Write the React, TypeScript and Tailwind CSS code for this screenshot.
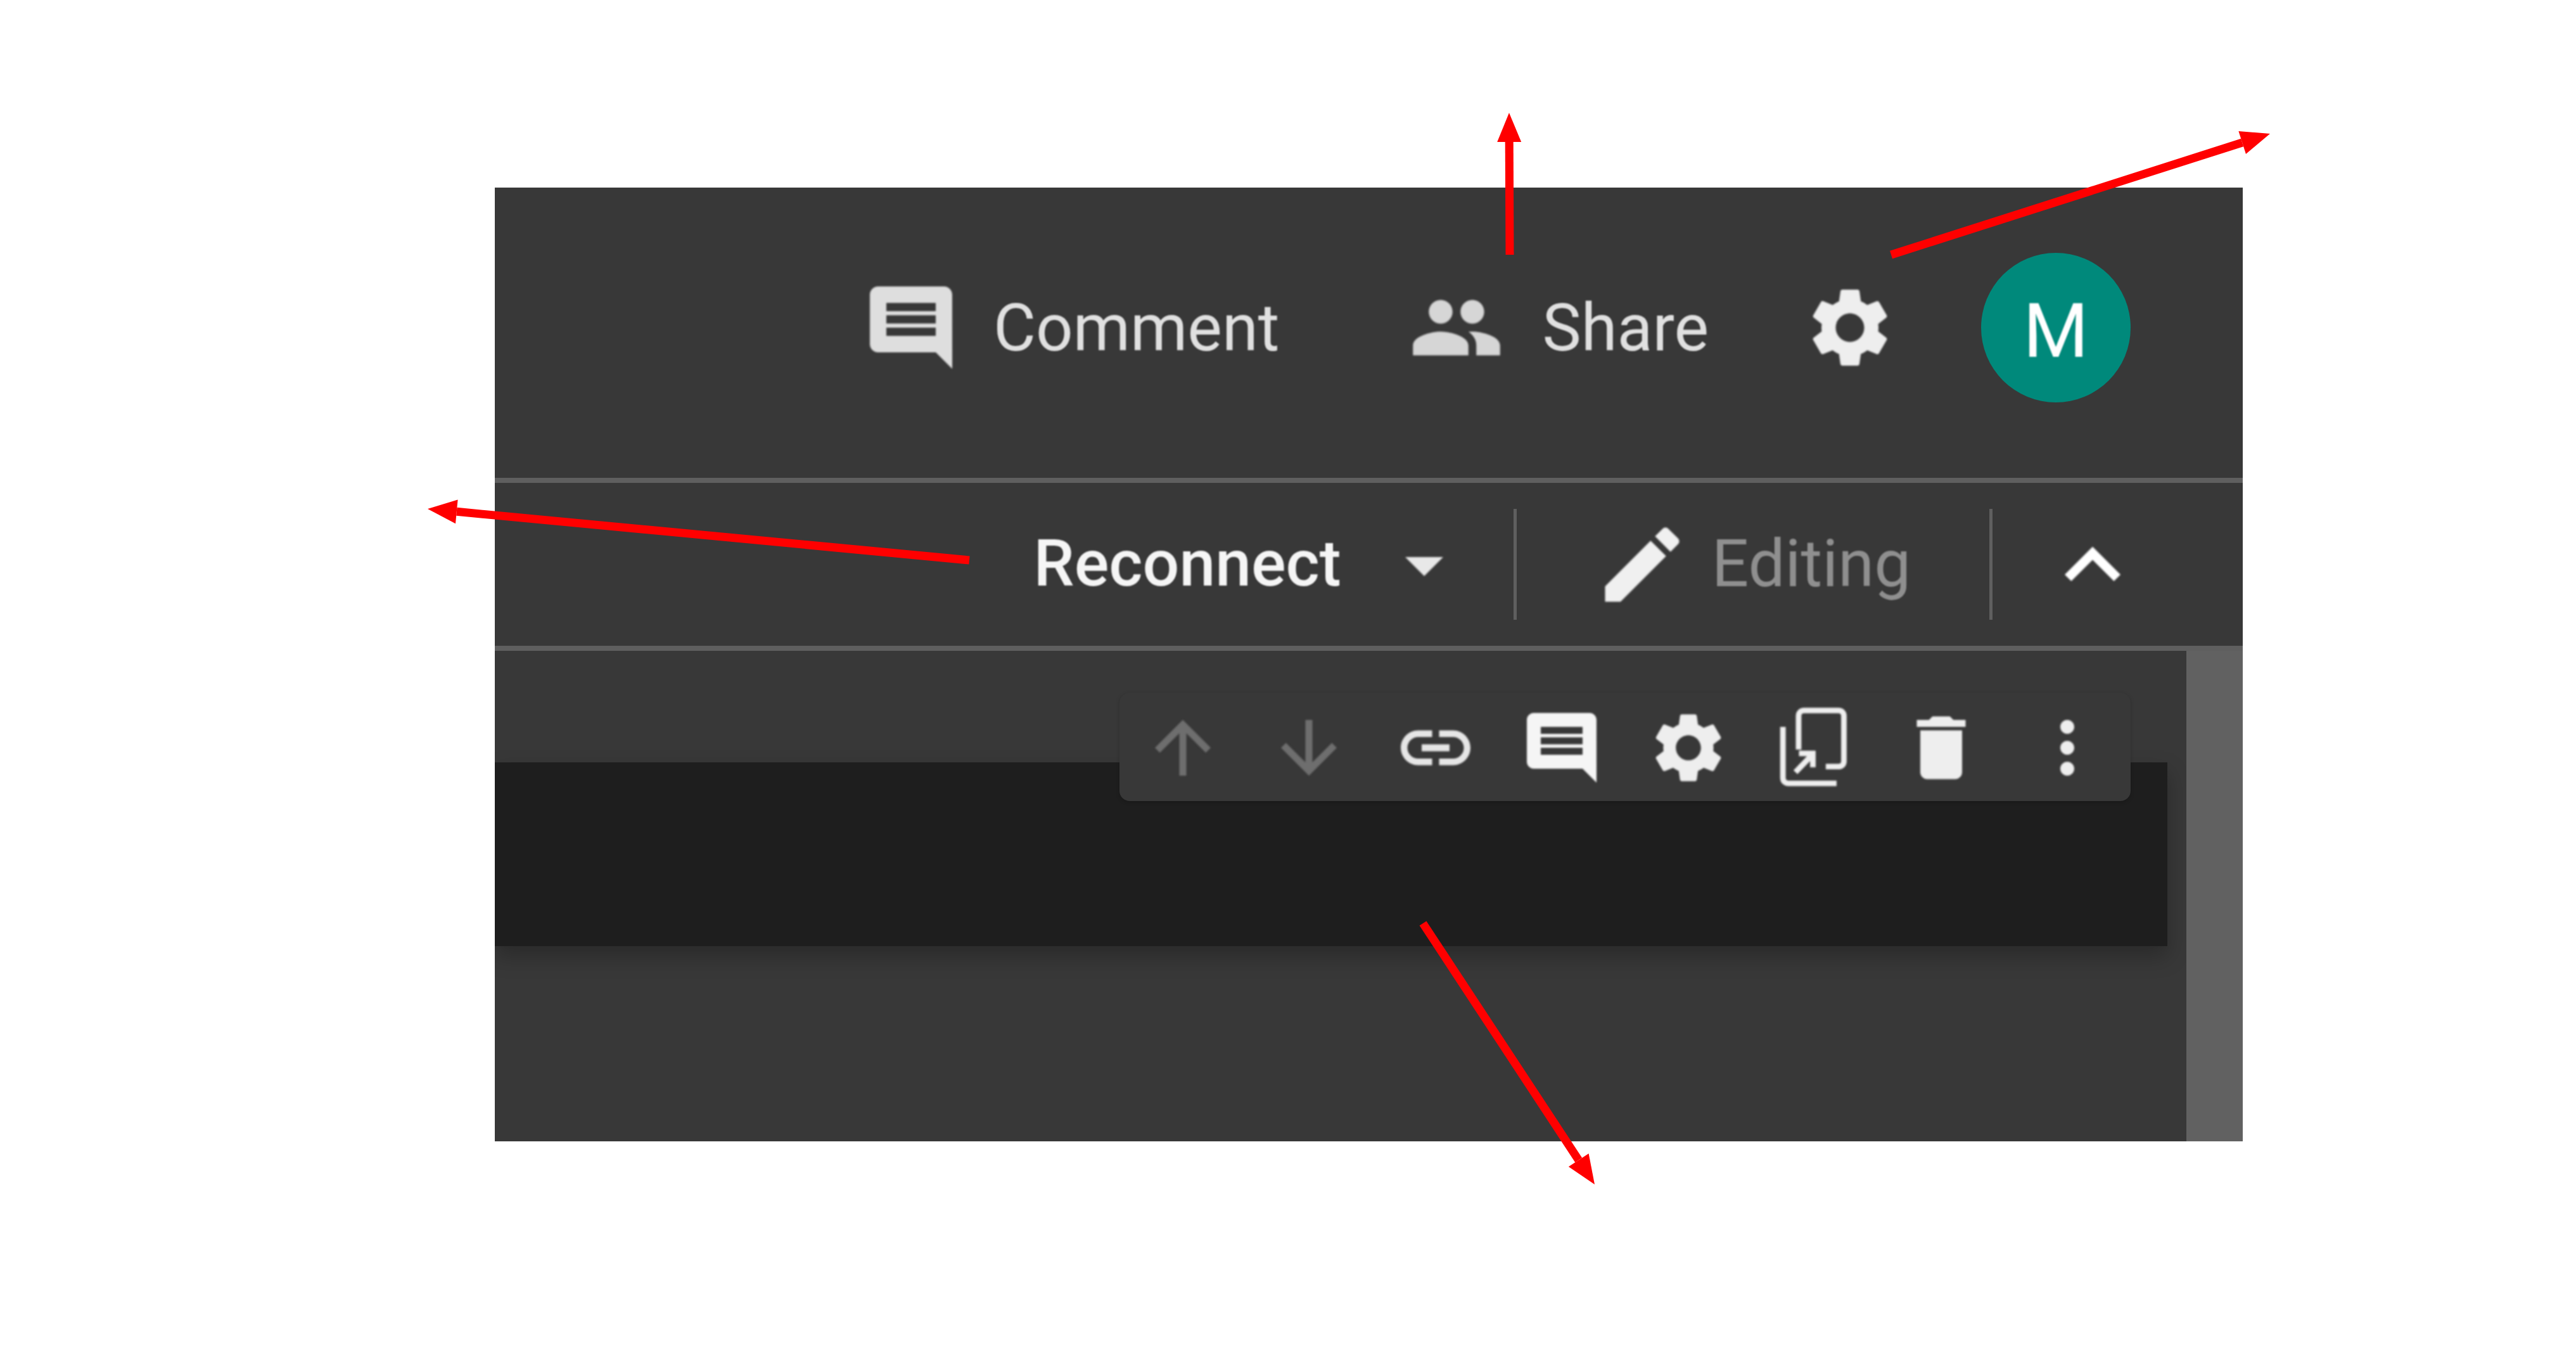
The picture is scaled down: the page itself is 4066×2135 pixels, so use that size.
const paths = {
  comment:
    "M21.99 4c0-1.1-.89-2-1.99-2H4c-1.1 0-2 .9-2 2v12c0 1.1.9 2 2 2h14l4 4-.01-18zM18 14H6v-2h12v2zm0-3H6V9h12v2zm0-3H6V6h12v2z",
  people:
    "M16 11c1.66 0 2.99-1.34 2.99-3S17.66 5 16 5c-1.66 0-3 1.34-3 3s1.34 3 3 3zm-8 0c1.66 0 2.99-1.34 2.99-3S9.66 5 8 5C6.34 5 5 6.34 5 8s1.34 3 3 3zm0 2c-2.33 0-7 1.17-7 3.5V19h14v-2.5c0-2.33-4.67-3.5-7-3.5zm8 0c-.29 0-.62.02-.97.05 1.16.84 1.97 1.97 1.97 3.45V19h6v-2.5c0-2.33-4.67-3.5-7-3.5z",
  settings:
    "M19.14 12.94c.04-.3.06-.61.06-.94 0-.32-.02-.64-.07-.94l2.03-1.58c.18-.14.23-.41.12-.61l-1.92-3.32c-.12-.22-.37-.29-.59-.22l-2.39.96c-.5-.38-1.03-.7-1.62-.94l-.36-2.54c-.04-.24-.24-.41-.48-.41h-3.84c-.24 0-.43.17-.47.41l-.36 2.54c-.59.24-1.13.57-1.62.94l-2.39-.96c-.22-.08-.47 0-.59.22L2.74 8.87c-.12.21-.08.47.12.61l2.03 1.58c-.05.3-.09.63-.09.94s.02.64.07.94l-2.03 1.58c-.18.14-.23.41-.12.61l1.92 3.32c.12.22.37.29.59.22l2.39-.96c.5.38 1.03.7 1.62.94l.36 2.54c.05.24.24.41.48.41h3.84c.24 0 .44-.17.47-.41l.36-2.54c.59-.24 1.13-.56 1.62-.94l2.39.96c.22.08.47 0 .59-.22l1.92-3.32c.12-.22.07-.47-.12-.61l-2.01-1.58zM12 15.6c-1.98 0-3.6-1.62-3.6-3.6s1.62-3.6 3.6-3.6 3.6 1.62 3.6 3.6-1.62 3.6-3.6 3.6z",
  edit: "M3 17.25V21h3.75L17.81 9.94l-3.75-3.75L3 17.25zM20.71 7.04c.39-.39.39-1.02 0-1.41l-2.34-2.34c-.39-.39-1.02-.39-1.41 0l-1.83 1.83 3.75 3.75 1.83-1.83z",
  link: "M3.9 12c0-1.71 1.39-3.1 3.1-3.1h4V7H7c-2.76 0-5 2.24-5 5s2.24 5 5 5h4v-1.9H7c-1.71 0-3.1-1.39-3.1-3.1zM8 13h8v-2H8v2zm9-6h-4v1.9h4c1.71 0 3.1 1.39 3.1 3.1s-1.39 3.1-3.1 3.1h-4V17h4c2.76 0 5-2.24 5-5s-2.24-5-5-5z",
  trash: "M6 19c0 1.1.9 2 2 2h8c1.1 0 2-.9 2-2V7H6v12zM19 4h-3.5l-1-1h-5l-1 1H5v2h14V4z",
  more: "M12 8c1.1 0 2-.9 2-2s-.9-2-2-2-2 .9-2 2 .9 2 2 2zm0 2c-1.1 0-2 .9-2 2s.9 2 2 2 2-.9 2-2-.9-2-2-2zm0 6c-1.1 0-2 .9-2 2s.9 2 2 2 2-.9 2-2-.9-2-2-2z",
  up: "M4 12l1.41 1.41L11 7.83V20h2V7.83l5.58 5.59L20 12l-8-8-8 8z",
  down: "M20 12l-1.41-1.41L13 16.17V4h-2v12.17l-5.58-5.59L4 12l8 8 8-8z",
  chevron: "M12 8l-6 6 1.41 1.41L12 10.83l4.59 4.58L18 14z",
  drop: "M7 10l5 5 5-5z",
};

const Icon = ({ d, className }: { d: string; className: string }) => (
  <svg viewBox="0 0 24 24" fill="currentColor" className={`shrink-0 blur-[1.5px] ${className}`}>
    <path d={d} />
  </svg>
);

// colab's "mirror cell in tab" icon
const MirrorIcon = () => (
  <svg viewBox="0 0 24 24" fill="none" stroke="currentColor" strokeWidth="1.6" className="w-[132px] h-[132px] shrink-0 blur-[1.5px] text-[#eeeeee] ml-[6px]">
    <path d="M6.9 12.5V2.9c0-1 .6-1.6 1.6-1.6h9.8c1 0 1.6.6 1.6 1.6v12.9c0 1-.6 1.6-1.6 1.6h-3.6" />
    <path d="M2.4 6v14.6c0 1 .6 1.6 1.6 1.6h13.8" />
    <path d="M6 19l5-5.2M7 13.6h4v4" />
  </svg>
);

const arrows = [
  { x1: 2383, y1: 402, x2: 2382, y2: 178 },
  { x1: 2985, y1: 402, x2: 3583, y2: 211 },
  { x1: 1530, y1: 884, x2: 675, y2: 803 },
  { x1: 2246, y1: 1457, x2: 2517, y2: 1869 },
];

const Arrows = () => (
  <svg className="absolute left-0 top-0 w-[4066px] h-[2135px] pointer-events-none" viewBox="0 0 4066 2135">
    {arrows.map((a, i) => {
      const len = Math.hypot(a.x2 - a.x1, a.y2 - a.y1);
      const ux = (a.x2 - a.x1) / len;
      const uy = (a.y2 - a.y1) / len;
      const bx = a.x2 - ux * 46;
      const by = a.y2 - uy * 46;
      const head = `${a.x2},${a.y2} ${bx - uy * 19},${by + ux * 19} ${bx + uy * 19},${by - ux * 19}`;
      return (
        <g key={i}>
          <line x1={a.x1} y1={a.y1} x2={bx} y2={by} stroke="#ff0000" strokeWidth="13" />
          <polygon points={head} fill="#ff0000" />
        </g>
      );
    })}
  </svg>
);

const App = () => {
  return (
    <div className="relative w-full h-[2135px] bg-white pl-[781px] pt-[296px] overflow-hidden font-['Roboto',sans-serif]">
      <div className="w-[2759px] h-[1505px] bg-[#383838] flex flex-col overflow-hidden">
        <div className="h-[466px] shrink-0 border-b-[8px] border-[#5f5f5f] flex items-center justify-end pr-[177px] pb-[16px]">
          <Icon d={paths.comment} className="w-[156px] h-[156px] text-[#dedede] mr-[52px]" />
          <span className="text-[103px] leading-none text-[#e0e0e0] mr-[204px] blur-[1px]">Comment</span>
          <Icon d={paths.people} className="w-[150px] h-[150px] text-[#d6d6d6] mr-[61px]" />
          <span className="text-[103px] leading-none text-[#e0e0e0] mr-[148px] blur-[1px]">Share</span>
          <Icon d={paths.settings} className="w-[150px] h-[150px] text-[#eeeeee] mr-[132px]" />
          <div className="w-[236px] h-[236px] rounded-full bg-[#00897b] flex items-center justify-center text-white text-[118px] leading-none pt-[12px]">
            <span className="blur-[1px]">M</span>
          </div>
        </div>

        <div className="h-[265px] shrink-0 border-b-[8px] border-[#5f5f5f] flex items-center justify-end pr-[149px]">
          <span className="text-[102px] leading-none font-medium text-[#f5f5f5] mr-[59px] mb-[3px] blur-[1px]">Reconnect</span>
          <Icon d={paths.drop} className="w-[144px] h-[144px] text-[#e8e8e8] mr-[69px]" />
          <div className="w-[5px] h-[175px] bg-[#5f5f5f] mr-[120px]" />
          <Icon d={paths.edit} className="w-[156px] h-[156px] text-[#f0f0f0] mr-[32px]" />
          <span className="text-[103px] leading-none text-[#8f8f8f] mr-[124px] mb-[3px] blur-[1px]">Editing</span>
          <div className="w-[5px] h-[175px] bg-[#5f5f5f] mr-[70px]" />
          <Icon d={paths.chevron} className="w-[176px] h-[176px] text-white mt-[3px]" />
        </div>

        <div className="flex-1 flex min-h-0">
          <div className="relative flex-1 pt-[176px] pr-[30px] overflow-hidden">
            <div className="h-[290px] bg-[#1e1e1e] shadow-[0_16px_32px_rgba(0,0,0,0.25)]" />
            {/* floating cell toolbar */}
            <div className="absolute right-[88px] top-[66px] w-[1596px] h-[171px] pt-[3px] rounded-[16px] bg-[#383838] shadow-[0_2px_6px_rgba(0,0,0,0.2)] grid grid-cols-8 place-items-center">
              <Icon d={paths.up} className="w-[132px] h-[132px] text-[#6e6e6e]" />
              <Icon d={paths.down} className="w-[132px] h-[132px] text-[#6e6e6e]" />
              <Icon d={paths.link} className="w-[132px] h-[132px] text-[#e6e6e6]" />
              <Icon d={paths.comment} className="w-[132px] h-[132px] text-[#f5f5f5]" />
              <Icon d={paths.settings} className="w-[132px] h-[132px] text-[#eeeeee]" />
              <MirrorIcon />
              <Icon d={paths.trash} className="w-[132px] h-[132px] text-[#eeeeee]" />
              <Icon d={paths.more} className="w-[132px] h-[132px] text-[#eeeeee]" />
            </div>
          </div>
          <div className="w-[89px] shrink-0 bg-[#616161]" />
        </div>
      </div>
      <Arrows />
    </div>
  );
};

export default App;
